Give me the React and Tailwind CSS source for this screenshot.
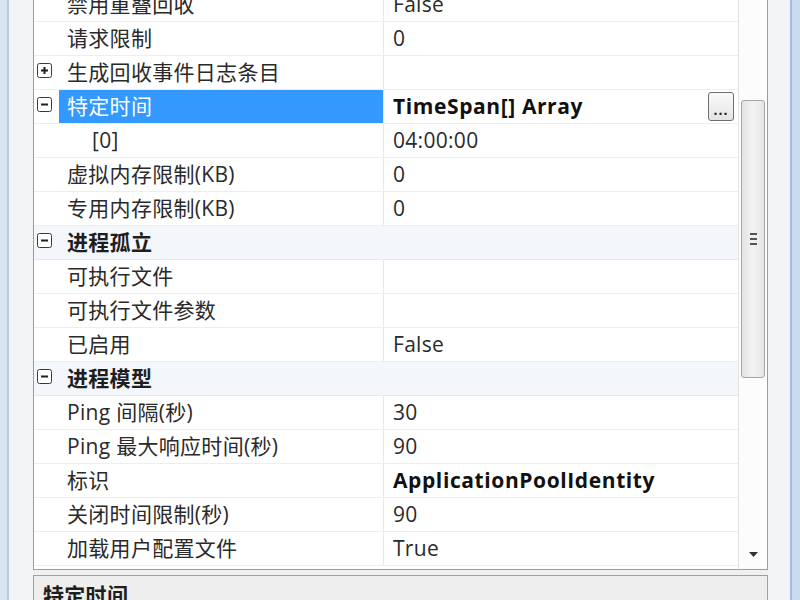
import React from "react";

const FONT = "font-['Open_Sans','Noto_Sans_CJK_SC',sans-serif]";

// Property rows of the advanced settings grid
const rows = [
  { name: "禁用重叠回收", value: "False" },
  { name: "请求限制", value: "0" },
  { name: "生成回收事件日志条目", value: "", glyph: "plus" },
  { name: "特定时间", value: "TimeSpan[] Array", glyph: "minus", selected: true, boldValue: true, button: true },
  { name: "[0]", value: "04:00:00", indent: true },
  { name: "虚拟内存限制(KB)", value: "0" },
  { name: "专用内存限制(KB)", value: "0" },
  { name: "进程孤立", category: true },
  { name: "可执行文件", value: "" },
  { name: "可执行文件参数", value: "" },
  { name: "已启用", value: "False" },
  { name: "进程模型", category: true },
  { name: "Ping 间隔(秒)", value: "30" },
  { name: "Ping 最大响应时间(秒)", value: "90" },
  { name: "标识", value: "ApplicationPoolIdentity", boldValue: true },
  { name: "关闭时间限制(秒)", value: "90" },
  { name: "加载用户配置文件", value: "True" },
];

function Glyph({ type }) {
  return (
    <svg width="15" height="15" viewBox="0 0 15 15" className="block">
      <rect x="0.5" y="0.5" width="14" height="14" rx="2" fill="#fff" stroke="#3a3a3a" />
      <rect x="4" y="6.5" width="7" height="2" fill="#1f1f1f" />
      {type === "plus" && <rect x="6.5" y="4" width="2" height="7" fill="#1f1f1f" />}
    </svg>
  );
}

function Row({ row }) {
  if (row.category) {
    return (
      <div className="flex h-[34px] shrink-0 bg-[#f3f6fa] border-b border-[#e6eaef]">
        <div className="w-[25px] shrink-0 pl-[3px] pt-[7px]">
          <Glyph type="minus" />
        </div>
        <div className="flex items-center pl-[8px] text-[21px] font-bold tracking-[0.3px] text-[#1e1e1e]">{row.name}</div>
      </div>
    );
  }
  return (
    <div className="flex h-[34px] shrink-0 border-b border-[#eeeeee]">
      <div className="w-[25px] shrink-0 pl-[3px] pt-[7px]">{row.glyph && <Glyph type={row.glyph} />}</div>
      <div
        className={
          "w-[324px] shrink-0 flex items-center text-[21px] tracking-[0.3px] whitespace-nowrap " +
          (row.indent ? "pl-[33px] " : "pl-[8px] ") +
          (row.selected ? "bg-[#3399ff] text-white" : "text-[#2a2a2a]")
        }
      >
        {row.name}
      </div>
      <div className="w-px shrink-0 bg-[#e8e8e8]" />
      <div className="flex-1 flex items-center pl-[9px] pr-[4px] text-[21px] tracking-[0.3px] text-[#2a2a2a] whitespace-nowrap">
        <span className={row.boldValue ? "font-bold tracking-[0.6px] text-[#111]" : ""}>{row.value}</span>
        {row.button && (
          <div className="ml-auto h-[29px] w-[26px] rounded-[3px] border border-[#6e6e6e] bg-gradient-to-b from-[#fafafa] to-[#e4e4e4] flex items-end justify-center pb-[3px]">
            <span className="text-[14px] leading-none font-bold tracking-[1px] text-[#222]">...</span>
          </div>
        )}
      </div>
    </div>
  );
}

function Scrollbar() {
  return (
    <div className="w-[29px] shrink-0 flex flex-col border-l border-[#e2e2e2] bg-[#fcfcfc]">
      <div className="h-[100px] shrink-0" />
      <div className="h-[278px] shrink-0 mx-[2px] rounded-[3px] border border-[#a6a6a6] bg-gradient-to-r from-[#e3e3e3] via-[#f2f2f2] to-[#e6e6e6] flex items-center justify-center">
        <div className="flex flex-col gap-[3px]">
          <div className="w-[7px] h-[2px] bg-[#555]" />
          <div className="w-[7px] h-[2px] bg-[#555]" />
          <div className="w-[7px] h-[2px] bg-[#555]" />
        </div>
      </div>
      <div className="flex-1" />
      <div className="h-[30px] shrink-0 flex items-center justify-center">
        <svg width="9" height="5" viewBox="0 0 9 5">
          <path d="M0 0 H9 L4.5 5 Z" fill="#333" />
        </svg>
      </div>
    </div>
  );
}

export default function App() {
  return (
    <div className={"w-[800px] h-[600px] overflow-hidden flex bg-[#f0f0f0] " + FONT}>
      <div className="w-[9px] shrink-0 bg-[#d8e4f2] border-r-2 border-[#b9c9db]" />
      <div className="w-[24px] shrink-0 bg-[#f3f4f6]" />
      <div className="w-[735px] shrink-0 flex flex-col">
        <div className="h-[570px] shrink-0 flex border-x border-b border-[#9c9c9c] bg-white overflow-hidden">
          <div className="w-[704px] shrink-0 flex flex-col -mt-[12px]">
            {rows.map((r, i) => (
              <Row key={i} row={r} />
            ))}
          </div>
          <Scrollbar />
        </div>
        <div className="mt-[5px] flex-1 border-x border-t border-[#a0a0a0] bg-[#eeeeee] pl-[9px] pt-[9px]">
          <div className="text-[21px] font-bold tracking-[0.3px] text-[#1e1e1e] leading-none">特定时间</div>
        </div>
      </div>
      <div className="w-[22px] shrink-0 bg-[#f3f4f6]" />
      <div className="w-[10px] shrink-0 bg-[#c9daef] border-l-2 border-[#a3bde0]" />
    </div>
  );
}
